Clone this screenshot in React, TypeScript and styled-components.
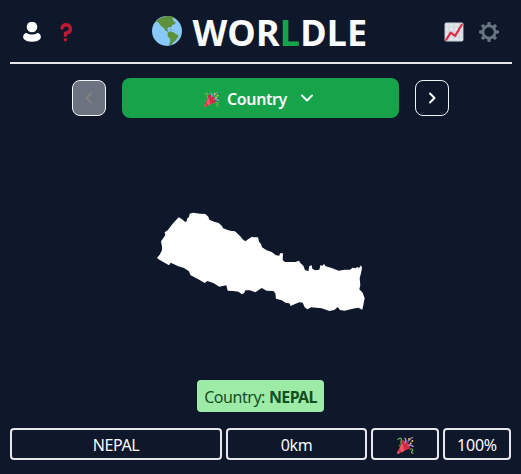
import React from "react";
import styled, { createGlobalStyle } from "styled-components";

const GlobalStyle = createGlobalStyle`
  * { box-sizing: border-box; }
  html, body { margin: 0; background: #0f172a; }
  body { font-family: "Noto Sans", "Open Sans", sans-serif; font-size: 16px; color: #f8fafc; overflow: hidden; }
  button { font: inherit; color: inherit; padding: 0; }
  svg { display: block; flex: none; }
`;

const Page = styled.main`
  width: 521px;
  height: 474px;
  padding: 0 9px 0 10px;
  display: flex;
  flex-direction: column;
  background: #0f172a;
`;

const Header = styled.header`
  height: 64px;
  flex: none;
  border-bottom: 2px solid #e5e7eb;
  display: flex;
  align-items: center;
  justify-content: space-between;
  padding: 1px 12px 0 13px;
`;

const IconGroup = styled.nav`
  display: flex;
  align-items: center;
  gap: 15px;
  width: 56px;
`;

const IconButton = styled.button`
  border: 0;
  background: none;
`;

const Title = styled.h1`
  margin: 0 3px 0 0;
  display: flex;
  align-items: center;
  gap: 10px;
  font-size: 36px;
  line-height: 40px;
  font-weight: 700;
`;

const Word = styled.span<{ $spacing: number }>`
  letter-spacing: ${(p) => p.$spacing}px;
  white-space: nowrap;
`;

const Brand = styled(Word)`
  padding-top: 2px;
`;

const Accent = styled.span`
  color: #16a34a;
`;

const Rounds = styled.div`
  display: flex;
  align-items: center;
  justify-content: center;
  gap: 16px;
  margin: 14px 1px 0 0;
  height: 40px;
  flex: none;
`;

const StepButton = styled.button`
  width: 34px;
  height: 36px;
  border: 1px solid #f1f5f9;
  border-radius: 8px;
  background: transparent;
  display: flex;
  align-items: center;
  justify-content: center;
  &:disabled { background: #6b7280; color: #808080; }
`;

const RoundPicker = styled.button`
  width: 277px;
  height: 40px;
  border: 0;
  border-radius: 8px;
  background: #16a34a;
  display: flex;
  align-items: center;
  justify-content: center;
  font-weight: 600;
  padding: 2px 4px 0 0;
`;

const PickerLabel = styled(Word)`
  margin: 0 14px 0 8px;
`;

const PickerArrow = styled.span`
  margin-top: -3px;
`;

const MapArea = styled.section`
  height: 262px;
  flex: none;
  display: flex;
  justify-content: center;
  padding: 94px 0 0 7px;
`;

const Answer = styled.div`
  align-self: center;
  width: 127px;
  height: 32px;
  flex: none;
  margin-right: 1px;
  padding-top: 2px;
  border-radius: 4px;
  background: #9deba7;
  color: #14501e;
  display: flex;
  align-items: center;
  justify-content: center;
  gap: 4px;
  white-space: nowrap;
`;

const AnswerName = styled(Word)`
  font-weight: 700;
`;

const GuessRow = styled.div`
  display: grid;
  grid-template-columns: 212px 141px 68px 68px;
  gap: 4px;
  margin-top: 16px;
`;

const GuessCell = styled.div`
  height: 32px;
  border: 2px solid #e5e7eb;
  border-radius: 4px;
  display: flex;
  align-items: center;
  justify-content: center;
  padding-top: 2px;
`;

const PersonIcon = () => (
  <svg width="18" height="20" viewBox="0 0 54 60" fill="#fff">
    <circle cx="27" cy="15" r="16" />
    <path d="M9 32C0 37-2 45 3 52c9 10 39 10 48 0 5-7 3-15-6-20-10 7-26 7-36 0z" />
  </svg>
);

const HelpIcon = () => (
  <svg width="20" height="20" viewBox="0 0 36 36" fill="#be1931">
    <path d="M17 27c-1.657 0-3-1.343-3-3v-4c0-1.657 1.343-3 3-3 .603-.006 6-1 6-5 0-2-2-4-5-4-2.441 0-4 2-4 3 0 1.657-1.343 3-3 3s-3-1.343-3-3c0-4.878 4.58-9 10-9 8 0 11 5.982 11 11 0 4.145-2.277 7.313-6.413 8.92-.9.351-1.79.587-2.587.747V24c0 1.657-1.343 3-3 3z" />
    <circle cx="17" cy="32" r="3" />
  </svg>
);

const Globe = styled.svg`
  margin-bottom: 2px;
`;

const GlobeIcon = () => (
  <Globe width="30" height="30" viewBox="0 0 90 90">
    <circle cx="45" cy="45" r="45" fill="#88c9f9" />
    <path
      fill="#5c913b"
      d="M9 20C18 9 30 2 44 0c8-1 17 1 23 5l-7 3 5 4-2 4 8 1-2 8-8 1-3 8-9 0-4 6 4 3-2 4-8-4-3-7-7-4-7-9-5-6zM47 50l6-4 10 2 8 6 8 4-1 6-8 10-6 5-5 7-5 2-3-3 4-9-1-8-7-7z"
    />
    <path fill="#5c913b" d="M53 39l5 1 3 3-5-1z" />
  </Globe>
);

const ChartIcon = () => (
  <svg width="20" height="20" viewBox="0 0 36 36">
    <rect x="1" y="1" width="34" height="34" rx="3" fill="#ccd6dd" />
    <path
      fill="#f5f8fa"
      d="M3 3h5v5H3zm7 0h7v5h-7zm9 0h7v5h-7zm9 0h5v5h-5zM3 10h5v7H3zm7 0h7v7h-7zm9 0h7v7h-7zm9 0h5v7h-5zM3 19h5v7H3zm7 0h7v7h-7zm9 0h7v7h-7zm9 0h5v7h-5zM3 28h5v5H3zm7 0h7v5h-7zm9 0h7v5h-7zm9 0h5v5h-5z"
      opacity=".5"
    />
    <path d="M4 32l8-13 8 6L32 5" fill="none" stroke="#dd2e44" strokeWidth="4" strokeLinecap="round" strokeLinejoin="round" />
  </svg>
);

const GearIcon = () => (
  <svg width="20" height="20" viewBox="0 0 36 36">
    <g fill="#66757f">
      {[0, 45, 90, 135].map((angle) => (
        <path
          key={angle}
          transform={`rotate(${angle} 18 18)`}
          d="M15 8V2Q15 0 17 0h2q2 0 2 2v6zM15 28v6q0 2 2 2h2q2 0 2-2v-6z"
        />
      ))}
    </g>
    <circle cx="18" cy="18" r="11" fill="none" stroke="#66757f" strokeWidth="5" />
  </svg>
);

const PartyIcon = ({ size }: { size: number }) => (
  <svg width={size} height={size} viewBox="0 0 36 36">
    <g fill="none" strokeLinecap="round" strokeLinejoin="round">
      <path stroke="#77b255" strokeWidth="2.5" d="M2 5l3-2c4-2 5 2 4 5s-2 7 2 9" />
      <path stroke="#aa8dd8" strokeWidth="2.7" d="M15 15c5-4 5-9 2-12M20 21c4-5 9-5 14-1" />
      <path stroke="#77b255" strokeWidth="2.5" d="M28 26c7-2 6 3 4 4s-2 4 2 4" />
      <path stroke="#aa8dd8" strokeWidth="2.3" d="M23 11c0-5 4-3 5-6s3-3 5-4" />
    </g>
    <path fill="#dd2e44" d="M11.6 7.6c-.4.5-.4 1.2-.3 1.9L.3 33.5c-.6 1.4.9 2.6 2.3 2.1l23.800-11c3-1.500.2-7-4.300-11.200-4.300-4-8.600-7.600-10.500-5.800z" />
    <path fill="#ea596e" d="M11 12L5.500 25l3.800 7.500-3.700 1.700L3 28l-2.700 5.500c-.6 1.400.9 2.600 2.300 2.100l13-6z" />
    <path fill="#cf2840" d="M23 12.500c4.400 4.500 5.800 9.900 4 11.800-1.900 1.800-7.800-.2-12-4.400-4.300-4.300-6.100-10.100-4.200-12 2-1.900 7.700.2 12.200 4.600z" />
    <path fill="none" stroke="#aa8dd8" strokeWidth="2.3" strokeLinecap="round" d="M17 13c2-3 2-7 0-10M23 18c3-2 7-1 11 2" />
    <g fill="#ffcc4d">
      <circle cx="25.5" cy="4" r="2" />
      <circle cx="32.5" cy="8.500" r="2" />
      <circle cx="29" cy="13" r="2" />
    </g>
    <circle cx="6" cy="18" r="2" fill="#5c913b" />
  </svg>
);

const Chevron = ({ d, width, height }: { d: string; width: number; height: number }) => (
  <svg width={width} height={height} viewBox={`0 0 ${width} ${height}`} fill="none" stroke="currentColor" strokeWidth="2">
    <path d={d} strokeLinecap="round" strokeLinejoin="round" />
  </svg>
);

const NepalShape = () => (
  <svg width="217" height="100" viewBox="18 36 651 300" fill="#fff">
    <path d="M21 174L30 163 36 150 36 140 33 124 40 114 46 105 44 97 53 91 68 71 86 52 94 56 106 66 110 64 112 55 117 51 119 41 130 38 150 41 166 42 175 50 178 59 192 65 206 69 216 78 219 85 240 92 255 94 270 108 278 118 286 124 304 111 314 112 324 112 327 125 333 132 336 142 350 151 365 156 378 166 388 167 390 160 399 160 398 180 405 186 436 186 447 182 452 190 460 197 465 210 475 214 478 198 485 196 487 206 495 211 508 209 511 196 517 197 522 192 527 199 545 204 566 212 585 209 600 209 608 203 616 205 622 201 627 204 633 196 636 203 633 220 629 235 631 255 628 268 638 278 644 295 640 315 637 329 625 323 608 326 584 332 570 330 563 321 553 330 538 333 515 325 484 322 472 328 464 322 458 308 448 307 435 312 422 318 418 310 408 309 395 301 378 296 376 280 370 273 350 272 335 264 316 277 300 271 286 271 283 278 276 283 265 275 250 273 233 272 229 256 208 260 190 249 172 243 164 249 145 238 122 226 116 213 102 204 85 199 62 188 57 196 40 186 28 179Z" />
  </svg>
);

export default function App() {
  return (
    <>
      <GlobalStyle />
      <Page>
        <Header>
          <IconGroup>
            <IconButton aria-label="Profile"><PersonIcon /></IconButton>
            <IconButton aria-label="Help"><HelpIcon /></IconButton>
          </IconGroup>
          <Title>
            <GlobeIcon />
            <Brand $spacing={0.25}>WOR<Accent>L</Accent>DLE</Brand>
          </Title>
          <IconGroup>
            <IconButton aria-label="Statistics"><ChartIcon /></IconButton>
            <IconButton aria-label="Settings"><GearIcon /></IconButton>
          </IconGroup>
        </Header>
        <Rounds>
          <StepButton disabled aria-label="Previous"><Chevron width={8} height={12} d="M6 1.500L1.500 6 6 10.500" /></StepButton>
          <RoundPicker>
            <PartyIcon size={15} />
            <PickerLabel $spacing={-0.4}>Country</PickerLabel>
            <PickerArrow><Chevron width={12} height={8} d="M1 1.500l5 5 5-5" /></PickerArrow>
          </RoundPicker>
          <StepButton aria-label="Next"><Chevron width={8} height={12} d="M2 1.500L6.500 6 2 10.500" /></StepButton>
        </Rounds>
        <MapArea><NepalShape /></MapArea>
        <Answer>
          <Word $spacing={-0.45}>Country:</Word>
          <AnswerName $spacing={-0.65}>NEPAL</AnswerName>
        </Answer>
        <GuessRow>
          <GuessCell><Word $spacing={-0.4}>NEPAL</Word></GuessCell>
          <GuessCell><Word $spacing={-0.4}>0km</Word></GuessCell>
          <GuessCell><PartyIcon size={17} /></GuessCell>
          <GuessCell><Word $spacing={-0.2}>100%</Word></GuessCell>
        </GuessRow>
      </Page>
    </>
  );
}
